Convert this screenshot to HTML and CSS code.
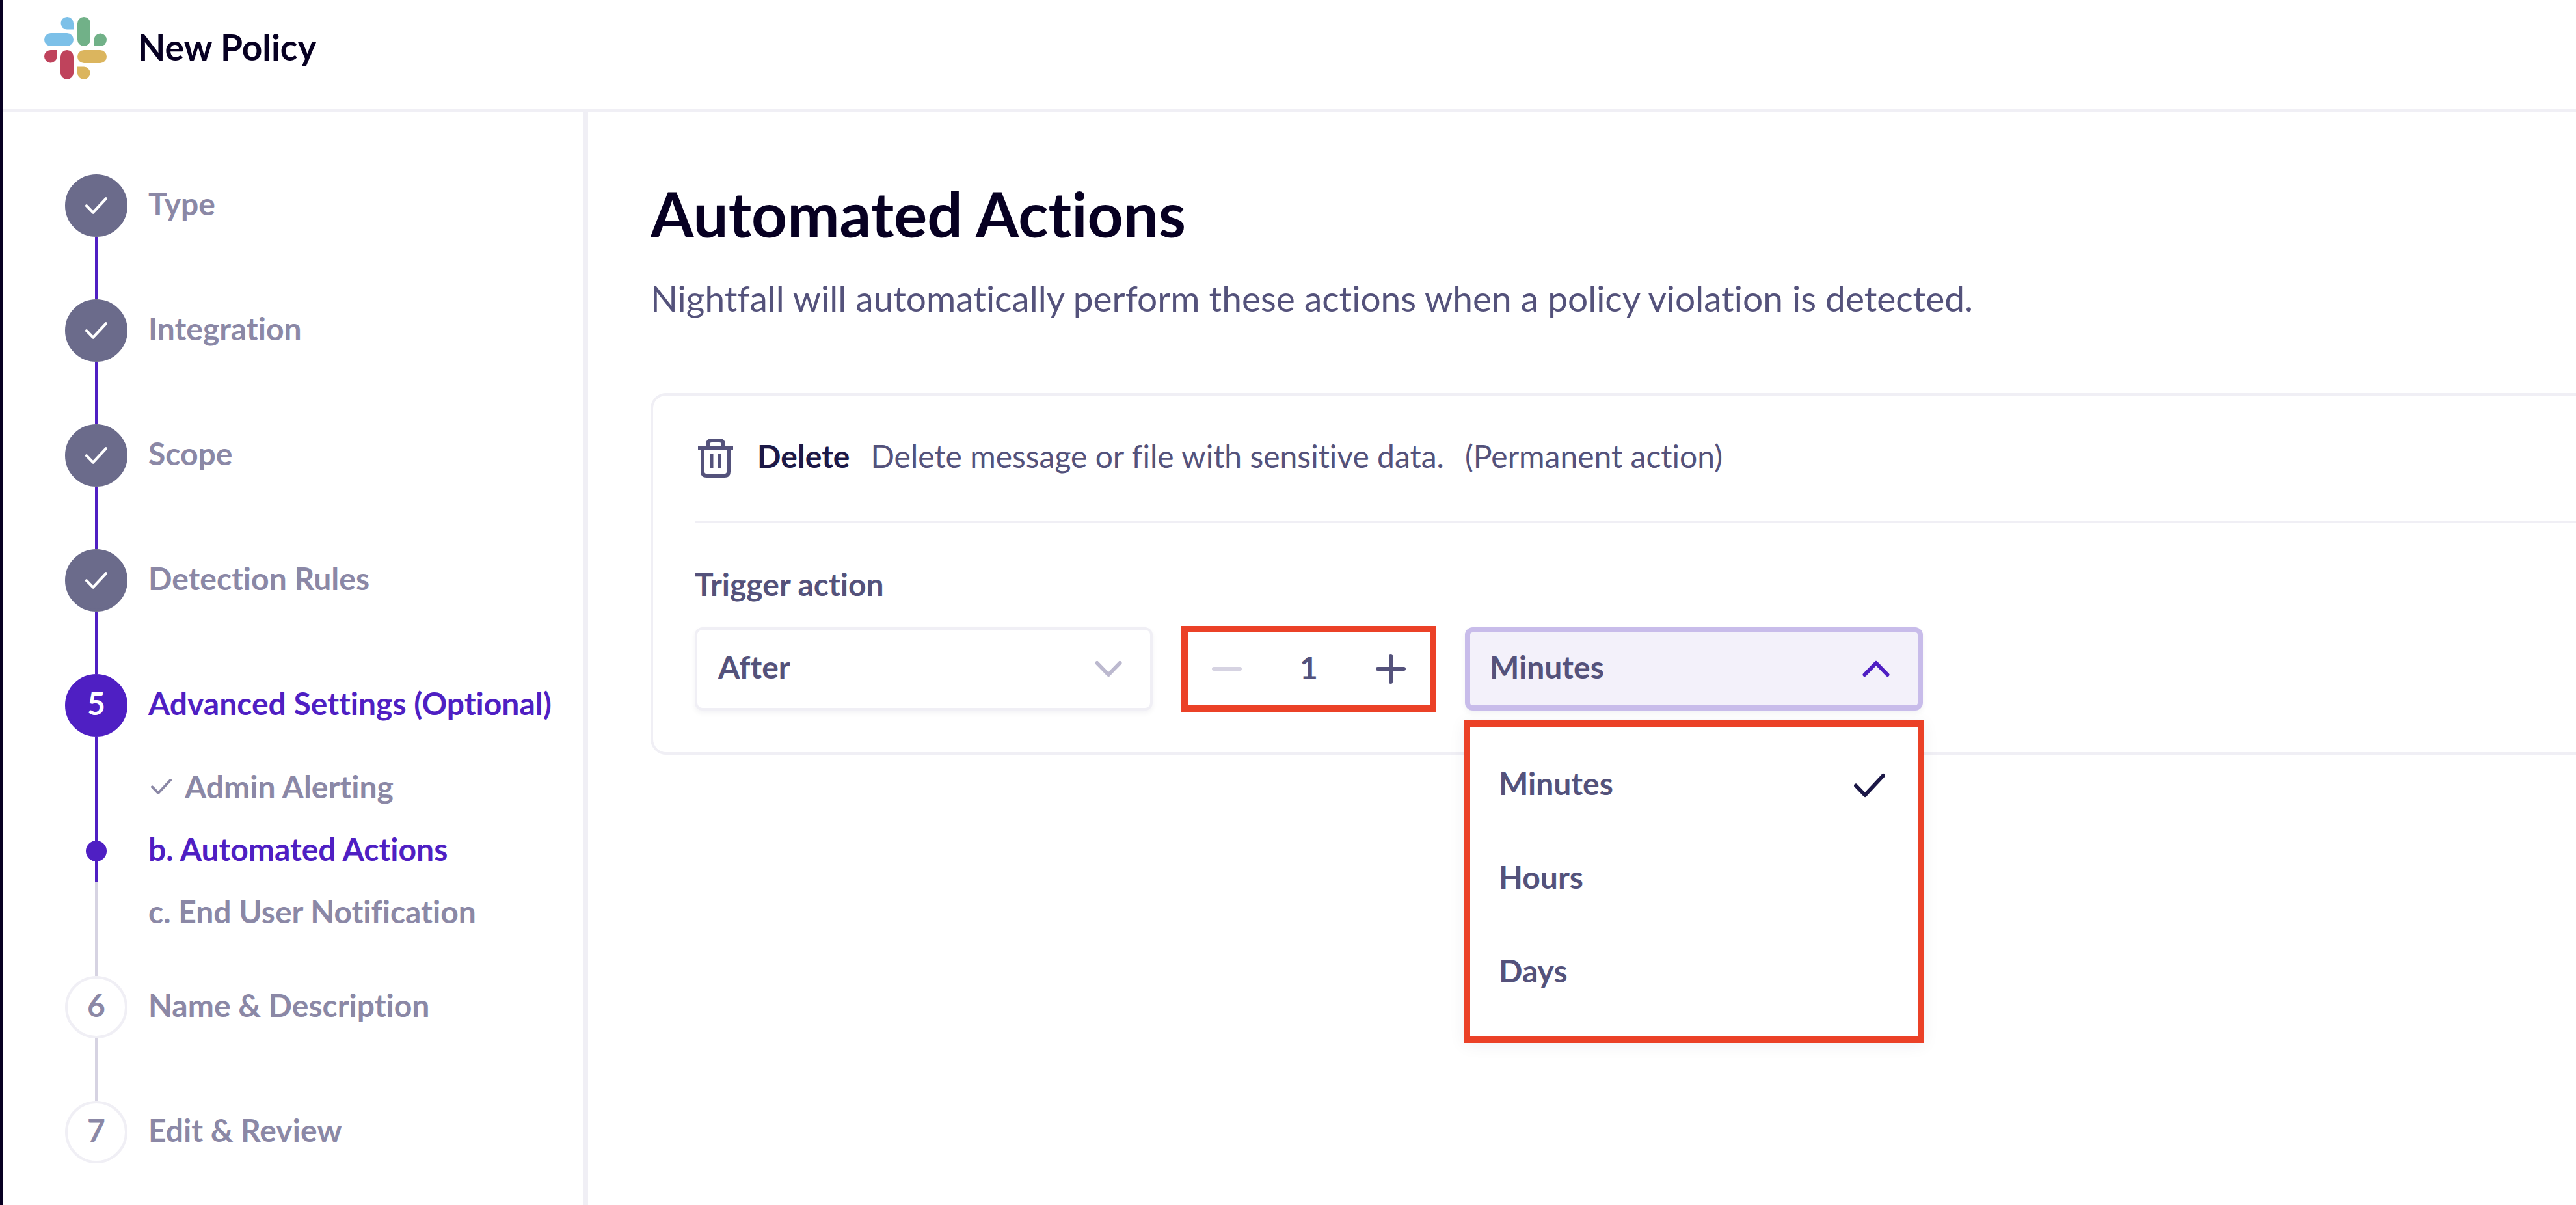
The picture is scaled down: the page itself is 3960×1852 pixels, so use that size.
FILE: index.html
```html
<!DOCTYPE html>
<html lang="en">
<head>
  <meta charset="utf-8">
  <meta name="viewport" content="width=device-width, initial-scale=1">
  <title>New Policy</title>
  <link rel="stylesheet" href="styles.css">
</head>
<body>
  <svg class="sprite" aria-hidden="true">
    <symbol id="check" viewBox="0 0 48 48"><path d="M3 24.500 L17 39 L45 9" /></symbol>
    <symbol id="chevron-down" viewBox="0 0 48 48"><path d="M6.500 15 L24 33 L41.500 15" /></symbol>
    <symbol id="chevron-up" viewBox="0 0 48 48"><path d="M6.500 33 L24 15 L41.500 33" /></symbol>
    <symbol id="minus" viewBox="0 0 48 48"><path d="M4 24 H44" /></symbol>
    <symbol id="plus" viewBox="0 0 48 48"><path d="M4 24 H44 M24 4 V44" /></symbol>
  </svg>
  <div class="app">
    <header class="header">
      <svg class="logo" viewBox="0 0 96 96" role="img" aria-label="Slack">
        <g fill="#7cc0e8">
          <rect x="0" y="25" width="45" height="20" rx="10" />
          <path d="M45 19.500 H35 A9.750 9.750 0 1 1 45 9.750 Z" />
        </g>
        <g fill="#71b188">
          <rect x="51" y="0" width="20" height="45" rx="10" />
          <path d="M76.500 45 V35 A9.750 9.750 0 1 1 86.250 45 Z" />
        </g>
        <g fill="#dbb55e">
          <rect x="51" y="51" width="45" height="20" rx="10" />
          <path d="M51 76.500 H61 A9.750 9.750 0 1 1 51 86.250 Z" />
        </g>
        <g fill="#bf435c">
          <rect x="25" y="51" width="20" height="45" rx="10" />
          <path d="M19.500 51 V61 A9.750 9.750 0 1 1 9.750 51 Z" />
        </g>
      </svg>
      <h2 class="header-title">New Policy</h2>
    </header>

    <div class="body">
      <nav class="sidebar" aria-label="Policy steps">
        <ol class="steps">
          <li class="step">
            <div class="rail"><span class="marker marker-done"><svg class="icon icon-small"><use href="#check" /></svg></span><span class="line line-done"></span></div>
            <a class="label" href="#type">Type</a>
          </li>
          <li class="step">
            <div class="rail"><span class="marker marker-done"><svg class="icon icon-small"><use href="#check" /></svg></span><span class="line line-done"></span></div>
            <a class="label" href="#integration">Integration</a>
          </li>
          <li class="step">
            <div class="rail"><span class="marker marker-done"><svg class="icon icon-small"><use href="#check" /></svg></span><span class="line line-done"></span></div>
            <a class="label" href="#scope">Scope</a>
          </li>
          <li class="step">
            <div class="rail"><span class="marker marker-done"><svg class="icon icon-small"><use href="#check" /></svg></span><span class="line line-done"></span></div>
            <a class="label" href="#detection-rules">Detection Rules</a>
          </li>
          <li class="step">
            <div class="rail"><span class="marker marker-current">5</span><span class="line line-done line-partial"><span class="dot"></span></span><span class="line line-rest"></span></div>
            <div>
              <a class="label label-active" href="#advanced">Advanced Settings (Optional)</a>
              <ul class="substeps">
                <li><a class="label label-checked" href="#alerting"><svg class="icon icon-check"><use href="#check" /></svg>Admin Alerting</a></li>
                <li><a class="label label-active" href="#actions" aria-current="step">b. Automated Actions</a></li>
                <li><a class="label" href="#notification">c. End User Notification</a></li>
              </ul>
            </div>
          </li>
          <li class="step">
            <div class="rail"><span class="marker">6</span><span class="line"></span></div>
            <a class="label" href="#name">Name &amp; Description</a>
          </li>
          <li class="step">
            <div class="rail"><span class="marker">7</span></div>
            <a class="label" href="#review">Edit &amp; Review</a>
          </li>
        </ol>
      </nav>

      <main class="main">
        <h1 class="title">Automated Actions</h1>
        <p class="subtitle">Nightfall will automatically perform these actions when a policy violation is detected.</p>

        <section class="card">
          <div class="card-head">
            <svg class="trash" viewBox="0 0 64 64" aria-hidden="true">
              <path d="M5 16 H59 M12 16 V53 Q12 59 18 59 H46 Q52 59 52 53 V16 M20 16 V11 Q20 5 26 5 H38 Q44 5 44 11 V16" />
              <path d="M26 26 V48 M38 26 V48" />
            </svg>
            <h3 class="action-name">Delete</h3>
            <span class="action-text">Delete message or file with sensitive data.</span>
            <span class="action-text">(Permanent action)</span>
          </div>

          <div class="card-body">
            <label class="field-label" for="trigger">Trigger action</label>
            <div class="controls">
              <div class="dropdown">
                <select class="select" id="trigger"><option>After</option></select>
                <svg class="icon chevron"><use href="#chevron-down" /></svg>
              </div>

              <div class="stepper">
                <button class="stepper-button" type="button" aria-label="Decrease" disabled><svg class="icon"><use href="#minus" /></svg></button>
                <input class="stepper-value" type="text" inputmode="numeric" value="1" aria-label="Amount">
                <button class="stepper-button" type="button" aria-label="Increase"><svg class="icon"><use href="#plus" /></svg></button>
              </div>

              <div class="dropdown dropdown-open">
                <select class="select" aria-label="Unit"><option>Minutes</option><option>Hours</option><option>Days</option></select>
                <svg class="icon chevron"><use href="#chevron-up" /></svg>
                <ul class="menu">
                  <li><button class="option" type="button" aria-pressed="true"><span class="option-text">Minutes</span><svg class="icon"><use href="#check" /></svg></button></li>
                  <li><button class="option" type="button"><span class="option-text">Hours</span></button></li>
                  <li><button class="option" type="button"><span class="option-text">Days</span></button></li>
                </ul>
              </div>
            </div>
          </div>
        </section>
      </main>
    </div>
  </div>
</body>
</html>
```
FILE: styles.css
```css
:root {
  --ink: #070022;
  --navy: #1c1847;
  --text: #54527b;
  --muted: #8b88a6;
  --slate: #6b6b8b;
  --border: #f0eff5;
  --rail: #d6d3e2;
  --purple: #4f1fc3;
  --highlight: #eb4127;
  --optical-lift: 6px;
}

* {
  box-sizing: border-box;
}

body {
  margin: 0;
  background: #fff;
  color: var(--text);
  font: 400 48px/48px Lato, "Open Sans", sans-serif;
  font-variant-ligatures: none;
}

h1, h2, h3, p, ol, ul {
  margin: 0;
  padding: 0;
  list-style: none;
}

button, input, select {
  margin: 0;
  border: 0;
  background: none;
  color: inherit;
  font: inherit;
}

a {
  color: inherit;
  text-decoration: none;
}

.sprite {
  display: none;
}

.icon {
  flex: none;
  width: 48px;
  height: 48px;
  fill: none;
  stroke: currentColor;
  stroke-width: 6;
  stroke-linejoin: round;
  stroke-linecap: round;
}

.icon-small {
  width: 34px;
  height: 34px;
}

.icon-check {
  width: 32px;
  height: 32px;
  margin: 0 4px;
}

.app {
  display: flex;
  flex-direction: column;
  min-height: 100vh;
  border-left: 4px solid var(--ink);
  overflow: hidden;
}

.header {
  display: flex;
  align-items: center;
  gap: 48px;
  height: 172px;
  padding: 0 64px 20px;
  border-bottom: 4px solid var(--border);
}

.logo {
  width: 96px;
  height: 96px;
}

.header-title {
  padding-bottom: 4px;
  color: var(--ink);
  font-size: 55px;
  font-weight: 700;
  line-height: 64px;
}

.body {
  display: flex;
  flex: 1;
}

/* Step navigation */

.sidebar {
  flex: none;
  width: 900px;
  padding: 96px 0 64px 96px;
  border-right: 8px solid var(--border);
  color: var(--muted);
  font-weight: 700;
}

.step {
  display: flex;
  gap: 32px;
}

.step:not(:last-child) {
  min-height: 192px;
}

.rail {
  display: flex;
  flex: none;
  flex-direction: column;
  align-items: center;
  width: 96px;
}

.marker {
  display: flex;
  flex: none;
  align-items: center;
  justify-content: center;
  width: 96px;
  height: 96px;
  padding-bottom: var(--optical-lift);
  border: 4px solid var(--border);
  border-radius: 50%;
}

.marker-done {
  padding-bottom: 0;
  border-color: var(--slate);
  background: var(--slate);
  color: #fff;
}

.marker-current {
  border-color: var(--purple);
  background: var(--purple);
  color: #fff;
}

.line {
  flex: 1;
  width: 4px;
  background: var(--rail);
}

.line-done {
  background: var(--purple);
}

.line-partial {
  position: relative;
  flex: 14;
}

.line-rest {
  flex: 9;
}

.dot {
  position: absolute;
  bottom: 32px;
  left: -14px;
  width: 32px;
  height: 32px;
  border-radius: 50%;
  background: var(--purple);
}

.label {
  display: flex;
  align-items: center;
  height: 96px;
  padding-bottom: var(--optical-lift);
  white-space: nowrap;
}

.label-active {
  color: var(--purple);
}

.label-checked {
  gap: 16px;
}

.substeps {
  padding: 32px 0 48px;
}

/* Main panel */

.main {
  flex: 1;
  min-width: 0;
  padding: 100px 0 96px 96px;
}

.title {
  color: var(--ink);
  font-size: 96px;
  font-weight: 700;
  line-height: 112px;
}

.subtitle {
  margin-top: 42px;
  font-size: 55px;
  line-height: 64px;
}

.card {
  margin-top: 114px;
  padding-left: 64px;
  border: 4px solid var(--border);
  border-right: 0;
  border-radius: 24px 0 0 24px;
}

.card-head {
  display: flex;
  align-items: center;
  gap: 32px;
  height: 196px;
  border-bottom: 4px solid var(--border);
}

.trash {
  width: 64px;
  height: 64px;
  fill: none;
  stroke: var(--text);
  stroke-width: 6;
}

.trash path + path {
  stroke-width: 5;
}

.action-name {
  padding-bottom: var(--optical-lift);
  color: var(--navy);
  font-size: 48px;
  font-weight: 700;
}

.action-text {
  padding-bottom: var(--optical-lift);
}

.card-body {
  padding: 70px 0 64px;
  font-weight: 700;
}

.field-label {
  display: block;
}

.controls {
  display: flex;
  align-items: center;
  gap: 44px;
  margin-top: 42px;
}

.dropdown {
  position: relative;
  display: grid;
  align-items: center;
  width: 704px;
}

.select {
  grid-area: 1 / 1;
  width: 100%;
  height: 128px;
  padding: 0 32px var(--optical-lift);
  border: 4px solid var(--border);
  border-radius: 12px;
  background: #fff;
  box-shadow: 0 4px 8px rgb(20 10 60 / 5%);
  appearance: none;
}

.chevron {
  grid-area: 1 / 1;
  justify-self: end;
  margin-right: 44px;
  color: #bcb9cf;
  pointer-events: none;
}

.dropdown-open .select {
  padding: 0 30px var(--optical-lift);
  border: 8px solid #c8bcea;
  background: #f3f1fa;
}

.dropdown-open .chevron {
  margin-right: 48px;
  color: var(--purple);
}

.stepper {
  display: flex;
  align-items: center;
  justify-content: space-between;
  width: 392px;
  height: 132px;
  margin: -2px 0;
  padding: 0 36px;
  border: 10px solid var(--highlight);
}

.stepper-button {
  display: flex;
  padding: 0;
}

.stepper-button:disabled {
  color: var(--rail);
}

.stepper-value {
  width: 96px;
  padding: 0 0 var(--optical-lift);
  text-align: center;
}

.menu {
  position: absolute;
  top: 143px;
  left: -2px;
  z-index: 1;
  width: 708px;
  padding: 18px 0 26px;
  border: 10px solid var(--highlight);
  background: #fff;
  box-shadow: 0 4px 24px rgb(20 10 60 / 6%);
}

.option {
  display: flex;
  align-items: center;
  justify-content: space-between;
  width: 100%;
  height: 144px;
  padding: 0 50px 0 44px;
  text-align: left;
}

.option-text {
  padding-bottom: var(--optical-lift);
}

.option .icon {
  color: var(--navy);
}
```
